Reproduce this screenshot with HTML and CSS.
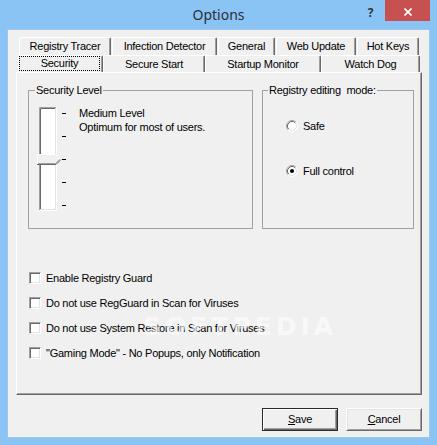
FILE: index.html
```html
<!DOCTYPE html>
<html>
<head>
<meta charset="utf-8">
<title>Options</title>
<link rel="stylesheet" href="styles.css">
</head>
<body>
<div class="window">
  <div class="titlebar">
    <div class="tb-spacer"></div>
    <div class="title">Options</div>
    <div class="controls">
      <span class="help">?</span>
      <span class="close"><svg width="8" height="8" viewBox="0 0 8 8"><path d="M0.5 0.5 L7.5 7.5 M7.5 0.5 L0.5 7.5" stroke="#fff" stroke-width="1.6" fill="none"/></svg></span>
    </div>
  </div>
  <div class="client">
    <div class="tabrow back">
      <div class="tab t-rt">Registry Tracer</div>
      <div class="tab t-id">Infection Detector</div>
      <div class="tab t-gen">General</div>
      <div class="tab t-wu">Web Update</div>
      <div class="tab t-hk">Hot Keys</div>
    </div>
    <div class="tabrow front">
      <div class="tab t-sec active"><span class="focus">Security</span></div>
      <div class="tab t-ss">Secure Start</div>
      <div class="tab t-sm">Startup Monitor</div>
      <div class="tab t-wd">Watch Dog</div>
    </div>
    <div class="panel">
      <div class="groups">
        <fieldset class="group level">
          <legend>Security Level</legend>
          <div class="level-body">
            <svg class="slider" width="32" height="108" viewBox="0 0 32 108">
              <rect x="3" y="2" width="17" height="104" fill="#fff"/>
              <path d="M3.5 106 V2.5 H20" stroke="#a0a0a0" fill="none"/>
              <path d="M4.5 105 V3.5 H19" stroke="#696969" fill="none"/>
              <path d="M3 105.5 H20.5 V2" stroke="#ffffff" fill="none"/>
              <path d="M4 104.5 H19.5 V3" stroke="#e3e3e3" fill="none"/>
              <polygon points="1,49 20,49 25,54.5 20,60 1,60" fill="#f0f0f0"/>
              <path d="M1.5 59 V49.5 H20 L24.5 54" stroke="#ffffff" fill="none"/>
              <path d="M1 59.5 H20 L24.8 54.7" stroke="#696969" fill="none"/>
              <path d="M2 58.5 H19.5 L23.5 54.5" stroke="#a0a0a0" fill="none"/>
              <path d="M26 8.5 H30 M26 31.5 H30 M26 54.5 H30 M26 77.5 H30 M26 100.5 H30" stroke="#000" fill="none"/>
            </svg>
            <div class="level-text">
              <div>Medium Level</div>
              <div>Optimum for most of users.</div>
            </div>
          </div>
        </fieldset>
        <fieldset class="group mode">
          <legend>Registry editing&nbsp; mode:</legend>
          <div class="radios">
            <div class="radio">
              <svg width="12" height="12" viewBox="0 0 12 12">
                <circle cx="6" cy="6" r="5" fill="#fff"/>
                <path d="M2.11 9.89 A5.5 5.5 0 0 1 9.89 2.11" stroke="#a0a0a0" fill="none"/>
                <path d="M2.82 9.18 A4.5 4.5 0 0 1 9.18 2.82" stroke="#696969" fill="none"/>
                <path d="M9.89 2.11 A5.5 5.5 0 0 1 2.11 9.89" stroke="#ffffff" fill="none"/>
                <path d="M9.18 2.82 A4.5 4.5 0 0 1 2.82 9.18" stroke="#e3e3e3" fill="none"/>
              </svg>
              <span>Safe</span>
            </div>
            <div class="radio">
              <svg width="12" height="12" viewBox="0 0 12 12">
                <circle cx="6" cy="6" r="5" fill="#fff"/>
                <path d="M2.11 9.89 A5.5 5.5 0 0 1 9.89 2.11" stroke="#a0a0a0" fill="none"/>
                <path d="M2.82 9.18 A4.5 4.5 0 0 1 9.18 2.82" stroke="#696969" fill="none"/>
                <path d="M9.89 2.11 A5.5 5.5 0 0 1 2.11 9.89" stroke="#ffffff" fill="none"/>
                <path d="M9.18 2.82 A4.5 4.5 0 0 1 2.82 9.18" stroke="#e3e3e3" fill="none"/>
                <circle cx="6" cy="6" r="2" fill="#000"/>
              </svg>
              <span>Full control</span>
            </div>
          </div>
        </fieldset>
      </div>
      <div class="checks">
        <div class="check"><span class="box"></span><span>Enable Registry Guard</span></div>
        <div class="check"><span class="box"></span><span>Do not use RegGuard in Scan for Viruses</span></div>
        <div class="check"><span class="box"></span><span>Do not use System Restore in Scan for Viruses</span></div>
        <div class="check"><span class="box"></span><span>"Gaming Mode" - No Popups, only Notification</span></div>
      </div>
      <div class="watermark">SOFTPEDIA</div>
    </div>
    <div class="buttons">
      <div class="btn default"><u>S</u>ave</div>
      <div class="btn"><u>C</u>ancel</div>
    </div>
  </div>
</div>
</body>
</html>
```

FILE: styles.css
```css
html, body {
  margin: 0;
  padding: 0;
}
body {
  font-family: "Liberation Sans", Arial, sans-serif;
  font-size: 11px;
  letter-spacing: -0.25px;
  color: #000;
}
.window {
  width: 437px;
  height: 445px;
  background: #8ac4f4;
  display: flex;
  flex-direction: column;
  box-sizing: border-box;
  overflow: hidden;
}
.titlebar {
  height: 29px;
  display: grid;
  grid-template-columns: 1fr auto 1fr;
  align-items: start;
}
.title {
  font-family: "Noto Sans", "Open Sans", sans-serif;
  font-size: 14px;
  letter-spacing: 0;
  line-height: 30px;
  color: #2b2f36;
}
.controls {
  display: flex;
  justify-content: flex-end;
  margin-right: 7px;
}
.help {
  width: 29px;
  height: 21px;
  text-align: center;
  font-family: "Noto Sans", sans-serif;
  font-weight: bold;
  font-size: 12px;
  line-height: 25px;
  letter-spacing: 0;
  color: #333;
}
.close {
  width: 45px;
  height: 21px;
  background: #c75050;
  display: flex;
  align-items: center;
  justify-content: center;
}
.close svg {
  margin-top: 2px;
}
.client {
  flex: 1;
  margin: 0 7px 7px 7px;
  border: 1px solid #9fc6e8;
  background: #f0f0f0;
  padding-top: 7px;
  display: flex;
  flex-direction: column;
}
.tabrow {
  display: flex;
}
.tabrow.back {
  height: 18px;
  margin-left: 11px;
}
.tabrow.front {
  height: 17px;
  margin-left: 10px;
}
.tab {
  box-sizing: border-box;
  height: 100%;
  border-top: 1px solid #fff;
  border-left: 1px solid #fff;
  border-right: 1px solid #696969;
  box-shadow: inset -1px 0 0 #a0a0a0;
  border-radius: 2px 2px 0 0;
  text-align: center;
  white-space: nowrap;
}
.back .tab {
  line-height: 17px;
  margin-right: 1px;
}
.front .tab {
  line-height: 16px;
}
.t-rt { width: 92px; }
.t-id { width: 105px; }
.t-gen { width: 57px; }
.t-wu { width: 80px; }
.t-hk { width: 62px; }
.t-sec { width: 85px; }
.t-ss { width: 102px; }
.t-sm { width: 116px; }
.t-wd { width: 99px; }
.tab.active {
  padding: 0 2px 0 0;
}
.focus {
  display: block;
  height: 15px;
  box-sizing: border-box;
  border: 1px dotted #000;
  line-height: 13px;
}
.panel {
  position: relative;
  height: 323px;
  box-sizing: border-box;
  margin: 0 7px 0 8px;
  border-top: 1px solid #fff;
  border-left: 1px solid #fff;
  border-right: 1px solid #696969;
  border-bottom: 1px solid #696969;
  box-shadow: inset -1px -1px 0 #a0a0a0;
  padding: 11px 0 0 11px;
}
.groups {
  display: flex;
  gap: 9px;
  align-items: flex-start;
}
.group {
  margin: 0;
  padding: 0;
  min-width: 0;
  height: 145px;
  box-sizing: border-box;
  border: 1px solid #a0a0a0;
}
.group legend {
  padding: 0 1px;
  line-height: 13px;
  white-space: nowrap;
}
.level {
  width: 225px;
}
.level legend {
  margin-left: 6px;
}
.mode {
  width: 152px;
}
.mode legend {
  margin-left: 5px;
}
.level-body {
  display: flex;
  align-items: flex-start;
  padding-left: 7px;
}
.slider {
  display: block;
  margin-top: 8px;
}
.level-text {
  margin-left: 11px;
  margin-top: 9px;
  line-height: 14px;
}
.radios {
  display: flex;
  flex-direction: column;
  gap: 31px;
  padding-top: 22px;
  padding-left: 23px;
}
.radio {
  display: flex;
  align-items: center;
  gap: 5px;
  height: 14px;
  line-height: 14px;
}
.radio svg {
  display: block;
}
.checks {
  margin-top: 36px;
  margin-left: 1px;
  display: flex;
  flex-direction: column;
}
.check {
  height: 25px;
  display: flex;
  align-items: center;
  gap: 5px;
  white-space: nowrap;
}
.box {
  width: 12px;
  height: 12px;
  box-sizing: border-box;
  border: 1px solid;
  border-color: #a0a0a0 #fff #fff #a0a0a0;
  background: #fff;
  box-shadow: inset 1px 1px 0 #696969, inset -1px -1px 0 #e3e3e3;
  flex: none;
}
.watermark {
  position: absolute;
  left: 126px;
  top: 241px;
  font-family: "DejaVu Sans", sans-serif;
  font-weight: bold;
  font-size: 25px;
  letter-spacing: 4px;
  line-height: 25px;
  color: rgba(255, 255, 255, 0.6);
  pointer-events: none;
}
.buttons {
  display: flex;
  justify-content: flex-end;
  gap: 8px;
  margin-top: 13px;
  margin-right: 7px;
}
.btn {
  width: 76px;
  height: 23px;
  box-sizing: border-box;
  border: 1px solid;
  border-color: #fff #696969 #696969 #fff;
  box-shadow: inset 1px 1px 0 #e3e3e3, inset -1px -1px 0 #a0a0a0;
  background: #f0f0f0;
  text-align: center;
  line-height: 21px;
}
.btn.default {
  border: 1px solid #2a2a2a;
  box-shadow: inset 1px 1px 0 #fff, inset -1px -1px 0 #696969, inset -2px -2px 0 #a0a0a0;
}
.btn u {
  text-decoration: underline;
  text-underline-offset: 1px;
}
```
